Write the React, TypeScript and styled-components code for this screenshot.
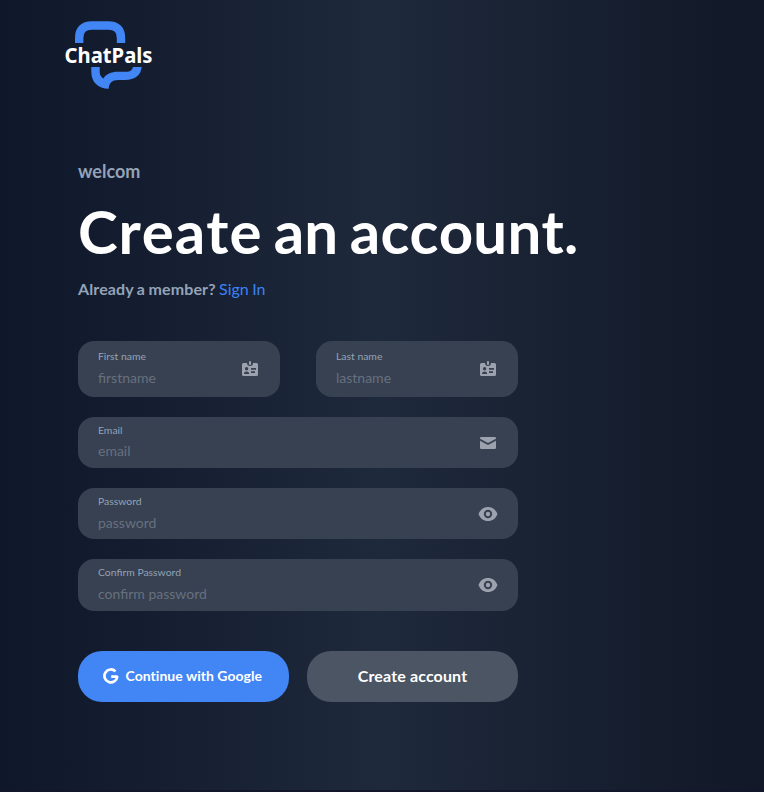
import React from 'react';
import styled, { createGlobalStyle } from 'styled-components';

const GlobalStyle = createGlobalStyle`
  * { box-sizing: border-box; }
  body { margin: 0; background: #12162a; font-family: Lato, sans-serif; }
`;

const Page = styled.main`
  height: 790px;
  margin-bottom: 2px;
  padding: 20px 0 0 64px;
  background: linear-gradient(to right, #0f172a, #1e293b, #111827);
`;

const Logo = styled.svg`
  display: block;
  width: 90px;
  height: 70px;
  overflow: visible;
`;

const Content = styled.section`
  width: 520px;
  margin: 69px 0 0 14px;
`;

const Welcome = styled.p`
  margin: 0;
  font-size: 18px;
  line-height: 24px;
  font-weight: 700;
  color: #94a3b8;
`;

const Title = styled.h1`
  margin: 18px 0 0;
  font-size: 60px;
  line-height: 60px;
  font-weight: 700;
  font-kerning: none;
  letter-spacing: 0.2px;
  word-spacing: -3.4px;
  color: #fff;
  white-space: nowrap;
`;

const TitleLead = styled.span`
  letter-spacing: 0.9px;
`;

const Member = styled.p`
  margin: 16px 0 0;
  font-size: 16px;
  line-height: 24px;
  font-weight: 700;
  letter-spacing: 0.12px;
  word-spacing: -0.6px;
  color: #94a3b8;
`;

const SignIn = styled.a`
  font-weight: 400;
  letter-spacing: 0;
  color: #3b82f6;
  text-decoration: none;
`;

const Form = styled.form`
  display: flex;
  flex-direction: column;
  gap: 20px;
  width: 440px;
  margin-top: 40px;
`;

const NameRow = styled.div`
  display: grid;
  grid-template-columns: 1fr 1fr;
  gap: 36px;
`;

const Field = styled.label<{ $tall?: boolean }>`
  display: flex;
  align-items: center;
  justify-content: space-between;
  height: ${({ $tall }) => ($tall ? '56px' : '51.2px')};
  padding: 0 20px;
  border-radius: 16px;
  background: #374151;
  color: #9ca3af;
`;

const FieldText = styled.span<{ $tall?: boolean }>`
  display: flex;
  flex: 1;
  min-width: 0;
  flex-direction: column;
  gap: ${({ $tall }) => ($tall ? '6px' : '5.6px')};
  padding-bottom: ${({ $tall }) => ($tall ? '3px' : '2px')};
`;

const Caption = styled.span`
  font-size: 10.4px;
  line-height: 14px;
  color: #94a3b8;
`;

const Input = styled.input`
  width: 100%;
  height: 18px;
  padding: 0;
  border: 0;
  outline: 0;
  background: transparent;
  font: 400 14px/18px Lato, sans-serif;
  color: #fff;
  &::placeholder { color: #67707f; opacity: 1; }
`;

const Icon = styled.svg`
  flex: none;
  width: 20px;
  height: 20px;
  fill: currentColor;
`;

const GoogleMark = styled.svg`
  flex: none;
  width: 16px;
  height: 16px;
`;

const Actions = styled.div`
  display: grid;
  grid-template-columns: 1fr 1fr;
  gap: 18px;
  margin-top: 20px;
`;

const Button = styled.button<{ $primary?: boolean }>`
  display: flex;
  align-items: center;
  justify-content: center;
  gap: 7px;
  height: 51px;
  padding: ${({ $primary }) => ($primary ? '0 2.5px 1px 0' : '0 0 2px')};
  border: 0;
  border-radius: 24px;
  background: ${({ $primary }) => ($primary ? '#4285f4' : '#4b5563')};
  color: #fff;
  font: 700 ${({ $primary }) => ($primary ? '14px' : '16px')} Lato, sans-serif;
  font-variant-ligatures: none;
  letter-spacing: ${({ $primary }) => ($primary ? '0.03px' : '0.14px')};
`;

const BadgeIcon = () => (
  <Icon viewBox="0 0 20 20">
    <path fillRule="evenodd" d="M3.500 4H7a3 3 0 0 0 6 0h3.500A1.500 1.500 0 0 1 18 5.500v10a1.500 1.500 0 0 1-1.500 1.500h-13A1.500 1.500 0 0 1 2 15.500v-10A1.500 1.500 0 0 1 3.500 4ZM6.600 8a1.700 1.700 0 1 0 0 3.400 1.700 1.700 0 0 0 0-3.400ZM4 15h5.200c0-1.700-.9-2.600-2.600-2.600S4 13.300 4 15Zm7-6v1.800h5V9Zm0 3.200V14h4v-1.800Z" />
    <rect x="9" y="2" width="2" height="4" rx="1" />
  </Icon>
);

const MailIcon = () => (
  <Icon viewBox="0 0 20 20">
    <path d="M3.300 4h13.400A1.300 1.300 0 0 1 18 5.300v.5l-8 4.200-8-4.200v-.5A1.300 1.300 0 0 1 3.300 4Z" />
    <path d="m2 7.800 8 4.200 8-4.200v6.900a1.300 1.300 0 0 1-1.300 1.300H3.300A1.300 1.300 0 0 1 2 14.700Z" />
  </Icon>
);

const EyeIcon = () => (
  <Icon viewBox="0 0 20 20">
    <path fillRule="evenodd" d="M10 3c4.400 0 7.800 2.600 9.500 7-1.700 4.400-5.100 7-9.500 7S2.200 14.400.500 10C2.200 5.600 5.600 3 10 3Zm0 2.800a4.200 4.200 0 1 0 0 8.400 4.200 4.200 0 0 0 0-8.400Z" />
    <circle cx="10" cy="10" r="2.200" />
  </Icon>
);

const GoogleIcon = () => (
  <GoogleMark viewBox="0 0 16 16">
    <path d="M12.500 3.400A6.450 6.450 0 1 0 14.300 8.700H8.200" fill="none" stroke="currentColor" strokeWidth="2.700" strokeLinejoin="bevel" />
  </GoogleMark>
);

type TextFieldProps = {
  caption: string;
  placeholder: string;
  type?: string;
  tall?: boolean;
  children: React.ReactNode;
};

const TextField = ({ caption, placeholder, type = 'text', tall, children }: TextFieldProps) => (
  <Field $tall={tall}>
    <FieldText $tall={tall}>
      <Caption>{caption}</Caption>
      <Input type={type} placeholder={placeholder} />
    </FieldText>
    {children}
  </Field>
);

export default function App() {
  return (
    <>
      <GlobalStyle />
      <Page>
        <Logo viewBox="0 0 90 70" role="img" aria-label="ChatPals">
          <path d="M15.200 23v-5Q15.200 5.500 28 5.500h16.200Q57 5.500 57 18v5" fill="none" stroke="#4285f4" strokeWidth="8.400" />
          <path d="M27.300 47v5C27.300 62 34 68.700 44.700 68.700C45 63 48 60 54.300 60H61C71 60 77 55 77.700 47H69C68 50.500 66 51.700 62 51.700H54C47 51.700 42 54 39.300 58.500C37 57 35.700 55 35.700 52V47Z" fill="#4285f4" />
          <text x="0.500" y="42.500" textLength="88" lengthAdjust="spacingAndGlyphs" fill="#fff" fontFamily="Noto Sans, sans-serif" fontSize="21" fontWeight="700">ChatPals</text>
        </Logo>
        <Content>
          <Welcome>welcom</Welcome>
          <Title><TitleLead>Create</TitleLead> an account.</Title>
          <Member>Already a member? <SignIn href="#">Sign In</SignIn></Member>
          <Form onSubmit={(event) => event.preventDefault()}>
            <NameRow>
              <TextField tall caption="First name" placeholder="firstname"><BadgeIcon /></TextField>
              <TextField tall caption="Last name" placeholder="lastname"><BadgeIcon /></TextField>
            </NameRow>
            <TextField caption="Email" placeholder="email"><MailIcon /></TextField>
            <TextField caption="Password" placeholder="password" type="password"><EyeIcon /></TextField>
            <TextField caption="Confirm Password" placeholder="confirm password" type="password"><EyeIcon /></TextField>
            <Actions>
              <Button type="button" $primary><GoogleIcon />Continue with Google</Button>
              <Button type="submit">Create account</Button>
            </Actions>
          </Form>
        </Content>
      </Page>
    </>
  );
}
